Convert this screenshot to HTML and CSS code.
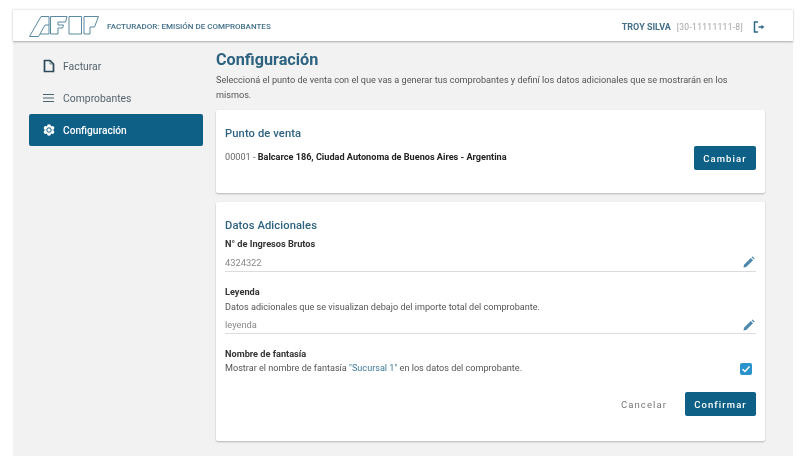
FILE: index.html
```html
<!DOCTYPE html>
<html lang="es">
<head>
<meta charset="utf-8">
<title>Facturador</title>
<link rel="stylesheet" href="styles.css">
</head>
<body>
<div class="app">
  <header class="topbar">
    <div class="brand">
      <svg class="logo" width="70" height="21" viewBox="0 0 70 21" fill="none" stroke="#5a8aa2" stroke-width="1">
        <path d="M.5 20.500 L12 .5 H20 V18 H11 L9.500 20.500 Z"/>
        <path d="M11 18 L16 9 H20"/>
        <path d="M21.500 18 V.5 H38 L36.500 6 H29 V9 H34.500 L33.500 12 H29 V18 Z"/>
        <path d="M40 .5 H52.500 V18 H40 Z"/>
        <path d="M55 .5 H69.500 L65.500 11 H61 V18 H55 Z"/>
      </svg>
      <span class="app-name">FACTURADOR: EMISIÓN DE COMPROBANTES</span>
    </div>
    <div class="user">
      <span class="user-name">TROY SILVA</span>
      <span class="user-id">[30-11111111-8]</span>
      <svg class="logout" width="12" height="12" viewBox="0 0 12 12" fill="none" stroke="#2f6a86" stroke-width="1.500">
        <path d="M5 1 H1.500 V11 H5"/>
        <path d="M5.500 6 H9"/>
        <path d="M8.500 3.800 L11.300 6 L8.500 8.200 Z" fill="#2f6a86" stroke="none"/>
      </svg>
    </div>
  </header>
  <div class="body">
    <nav class="side">
      <a class="nav-item">
        <svg width="12" height="14" viewBox="0 0 12 14" fill="none" stroke="#2c4a5a" stroke-width="1.700"><path d="M1.500 1.500 H7 L10.500 5 V12.500 H1.500 Z"/><path d="M7 1.500 V5 H10.500" stroke-width=".6"/></svg>
        Facturar
      </a>
      <a class="nav-item">
        <svg width="12" height="14" viewBox="0 0 12 14" fill="none" stroke="#4a6472" stroke-width="1"><path d="M0 3.500 H11 M0 7 H11 M0 10.500 H11"/></svg>
        Comprobantes
      </a>
      <a class="nav-item active">
        <svg width="12" height="14" viewBox="0 0 12 14" fill="#fff">
          <circle cx="6" cy="3.200" r="2"/><circle cx="9.300" cy="5.100" r="2"/><circle cx="9.300" cy="8.900" r="2"/>
          <circle cx="6" cy="10.800" r="2"/><circle cx="2.700" cy="8.900" r="2"/><circle cx="2.700" cy="5.100" r="2"/>
          <circle cx="6" cy="7" r="3"/>
          <circle cx="6" cy="7" r="2.200" fill="none" stroke="#0f6086" stroke-width="1"/>
        </svg>
        Configuración
      </a>
    </nav>
    <main class="main">
      <h1 class="title">Configuración</h1>
      <p class="intro">Seleccioná el punto de venta con el que vas a generar tus comprobantes y definí los datos adicionales que se mostrarán en los mismos.</p>
      <section class="card pv">
        <h2 class="card-title">Punto de venta</h2>
        <div class="pv-row">
          <p class="pv-text">00001 - <b>Balcarce 186, Ciudad Autonoma de Buenos Aires - Argentina</b></p>
          <button class="btn">Cambiar</button>
        </div>
      </section>
      <section class="card extra">
        <h2 class="card-title">Datos Adicionales</h2>
        <h3 class="label">N° de Ingresos Brutos</h3>
        <div class="field">
          <span>4324322</span>
          <svg class="pencil" width="12" height="12" viewBox="0 0 12 12" fill="#4c88ad"><path d="M0.500 11.500 L1 8.800 L7.800 2 L10 4.200 L3.200 11 Z M8.600 1.200 L9.500 0.400 L11.600 2.500 L10.800 3.400 Z"/></svg>
        </div>
        <h3 class="label second">Leyenda</h3>
        <p class="desc">Datos adicionales que se visualizan debajo del importe total del comprobante.</p>
        <div class="field tight">
          <span>leyenda</span>
          <svg class="pencil" width="12" height="12" viewBox="0 0 12 12" fill="#4c88ad"><path d="M0.500 11.500 L1 8.800 L7.800 2 L10 4.200 L3.200 11 Z M8.600 1.200 L9.500 0.400 L11.600 2.500 L10.800 3.400 Z"/></svg>
        </div>
        <h3 class="label third">Nombre de fantasía</h3>
        <div class="check-row">
          <p class="desc">Mostrar el nombre de fantasía <span class="accent">"Sucursal 1"</span> en los datos del comprobante.</p>
          <span class="check"><svg width="12" height="12" viewBox="0 0 12 12" fill="none" stroke="#fff" stroke-width="1.500"><path d="M2.500 6.200 L5 8.500 L9.500 3.500"/></svg></span>
        </div>
        <div class="actions">
          <button class="btn ghost">Cancelar</button>
          <button class="btn wide">Confirmar</button>
        </div>
      </section>
    </main>
  </div>
</div>
</body>
</html>
```

FILE: styles.css
```css
* { box-sizing: border-box; }
html, body { margin: 0; height: 100%; background: #fff; }
body { font-family: Roboto, "Liberation Sans", sans-serif; color: #444; overflow: hidden; }
.app { margin: 9px 8px 7px 13px; height: 447px; display: flex; flex-direction: column; background: #f2f2f2; filter: blur(.35px); }
.topbar { height: 32px; background: #fff; display: flex; align-items: center; justify-content: space-between; padding: 2px 28px 0 16px; box-shadow: 0 1px 2px rgba(0,0,0,.3); border-top: 1px solid #eee; position: relative; }
.brand { display: flex; align-items: center; gap: 8px; }
.logo { display: block; }
.app-name { font-size: 8px; font-weight: 500; color: #42708a; }
.user { display: flex; align-items: center; font-size: 8.500px; }
.user-name { font-size: 9px; font-weight: 700; color: #44708a; margin-right: 6px; }
.user-id { color: #a5a5a5; letter-spacing: .3px; margin-right: 10px; }
.body { flex: 1; display: flex; min-height: 0; }
.side { width: 203px; padding: 9px 13px 0 16px; flex: none; }
.nav-item { height: 32px; display: flex; align-items: center; gap: 8px; padding: 0 14px; font-size: 10.400px; color: #55646e; border-radius: 2px; }
.nav-item.active { background: #0f6086; color: #fff; font-size: 10.200px; font-weight: 500; }
.main { flex: 1; padding: 9px 28px 0 0; min-width: 0; }
.title { margin: 0; font-size: 16.200px; line-height: 20px; font-weight: 700; color: #2d6380; }
.intro { margin: 3px 0 0; font-size: 9.150px; line-height: 14.500px; color: #555; padding-right: 20px; }
.card { background: #fff; border-radius: 2px; box-shadow: 0 1px 2px rgba(0,0,0,.25); padding: 16px 9px 0 9px; }
.pv { height: 83px; margin-top: 8px; }
.extra { height: 239px; margin-top: 9px; }
.card-title { margin: 0; font-size: 11.200px; line-height: 16px; font-weight: 500; color: #2d6380; letter-spacing: .1px; }
.pv-row { display: flex; justify-content: space-between; align-items: flex-start; margin-top: 4px; }
.pv-text { margin: 0; font-size: 9.150px; line-height: 12px; padding-top: 5px; color: #666; }
.pv-text b { color: #222; font-weight: 700; }
.btn { height: 24px; width: 62px; border: 0; border-radius: 2px; background: #0f6086; color: #fff; font: 500 9.500px Roboto, sans-serif; letter-spacing: 1.100px; padding: 0; }
.btn.wide { width: 71px; }
.btn.ghost { background: transparent; color: #777; font-weight: 400; width: 62px; }
.label { margin: 4px 0 0; font-size: 9.200px; line-height: 12px; font-weight: 700; color: #333; }
.label.second { margin-top: 14px; }
.label.third { margin-top: 14px; }
.desc { margin: 3px 0 0; font-size: 9.100px; line-height: 12px; color: #555; }
.accent { color: #3f7a9c; }
.field { height: 22px; padding: 3px 1px 0 0; border-bottom: 1px solid #dcdcdc; display: flex; align-items: center; justify-content: space-between; font-size: 9.300px; color: #888; }
.field.tight { height: 21px; }
.pencil { display: block; }
.check-row { display: flex; justify-content: space-between; align-items: flex-start; }
.check-row .desc { margin-top: 2px; }
.check { width: 12px; height: 12px; border-radius: 2px; background: #2a93cb; margin: 3px 4px 0 0; display: block; }
.check svg { display: block; }
.actions { display: flex; justify-content: flex-end; gap: 10px; margin-top: 17px; }
```
